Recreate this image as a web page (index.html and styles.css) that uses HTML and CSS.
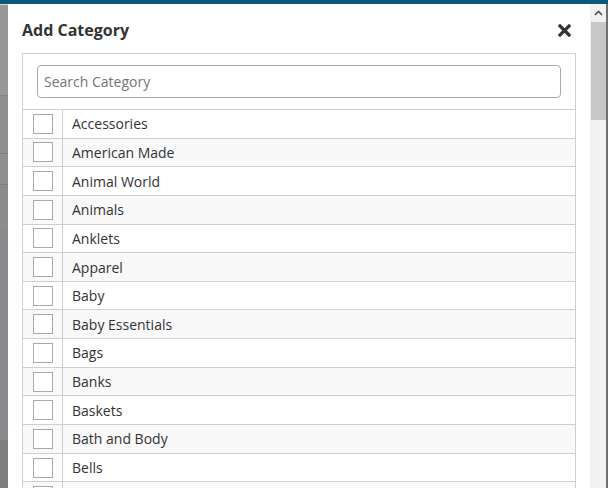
FILE: index.html
```html
<!DOCTYPE html>
<html>
<head>
<meta charset="utf-8">
<link rel="stylesheet" href="styles.css">
</head>
<body>
<div class="topbar"></div>
<div class="backdrop"></div>
<div class="modal">
  <div class="modal-content">
    <div class="modal-header">
      <h2 class="title">Add Category</h2>
      <button class="close" aria-label="Close">
        <svg width="13" height="13" viewBox="0 0 13 13"><path d="M2 2 L11 11 M11 2 L2 11" stroke="#333" stroke-width="3.2" stroke-linecap="square"/></svg>
      </button>
    </div>
    <div class="modal-body">
      <div class="cat-table">
        <div class="search-row">
          <input class="search" type="text" placeholder="Search Category">
        </div>
        <div class="row"><div class="cell-check"><span class="box"></span></div><div class="cell-name">Accessories</div></div>
        <div class="row alt"><div class="cell-check"><span class="box"></span></div><div class="cell-name">American Made</div></div>
        <div class="row"><div class="cell-check"><span class="box"></span></div><div class="cell-name">Animal World</div></div>
        <div class="row alt"><div class="cell-check"><span class="box"></span></div><div class="cell-name">Animals</div></div>
        <div class="row"><div class="cell-check"><span class="box"></span></div><div class="cell-name">Anklets</div></div>
        <div class="row alt"><div class="cell-check"><span class="box"></span></div><div class="cell-name">Apparel</div></div>
        <div class="row"><div class="cell-check"><span class="box"></span></div><div class="cell-name">Baby</div></div>
        <div class="row alt"><div class="cell-check"><span class="box"></span></div><div class="cell-name">Baby Essentials</div></div>
        <div class="row"><div class="cell-check"><span class="box"></span></div><div class="cell-name">Bags</div></div>
        <div class="row alt"><div class="cell-check"><span class="box"></span></div><div class="cell-name">Banks</div></div>
        <div class="row"><div class="cell-check"><span class="box"></span></div><div class="cell-name">Baskets</div></div>
        <div class="row alt"><div class="cell-check"><span class="box"></span></div><div class="cell-name">Bath and Body</div></div>
        <div class="row"><div class="cell-check"><span class="box"></span></div><div class="cell-name">Bells</div></div>
        <div class="row alt"><div class="cell-check"><span class="box"></span></div><div class="cell-name"></div></div>
      </div>
    </div>
  </div>
  <div class="scrollbar">
    <div class="sb-up">
      <svg width="9" height="6" viewBox="0 0 9 6"><path d="M1 5 L4.5 1.5 L8 5" fill="none" stroke="#505050" stroke-width="1.6"/></svg>
    </div>
    <div class="sb-thumb"></div>
  </div>
</div>
</body>
</html>
```

FILE: styles.css
```css
html, body {
  margin: 0;
  padding: 0;
  height: 100%;
  overflow: hidden;
}
body {
  font-family: "Open Sans", "Liberation Sans", sans-serif;
  background: #8e8e8e;
  color: #333;
}
.topbar {
  height: 4px;
  background: #0b5877;
  border-bottom: 1px solid #d8d8d8;
}
.backdrop {
  height: 100%;
  background: linear-gradient(to bottom,
      #979797 0px, #979797 90px, #858585 90px, #858585 91px,
      #8f8f8f 91px, #8f8f8f 148px, #7f7f7f 148px, #7f7f7f 149px,
      #8f8f8f 149px, #8f8f8f 179px, #7f7f7f 179px, #7f7f7f 180px,
      #8c8c8c 180px, #8c8c8c 222px, #888a8d 222px, #888a8d 435px,
      #7d7e80 435px);
}
.modal {
  position: absolute;
  left: 8px;
  top: 4px;
  width: 598px;
  bottom: 0;
  background: #fff;
  border-right: 2px solid #6f6f6f;
  display: flex;
  overflow: hidden;
}
.modal-content {
  flex: 1;
  min-width: 0;
  overflow: hidden;
}
.modal-header {
  display: flex;
  align-items: center;
  justify-content: space-between;
  padding: 15px 19px 12px 14px;
  height: 22px;
}
.title {
  margin: 0;
  font-size: 16px;
  line-height: 22px;
  font-weight: 700;
  color: #333;
}
.close {
  border: 0;
  background: transparent;
  padding: 0;
  margin: 0;
  width: 13px;
  height: 13px;
  display: flex;
}
.modal-body {
  padding: 0 14px 20px 14px;
}
.cat-table {
  border: 1px solid #cfcfcf;
}
.search-row {
  padding: 11px 14px 11px 14px;
  border-bottom: 1px solid #cfcfcf;
}
.search {
  display: block;
  box-sizing: border-box;
  width: 100%;
  height: 33px;
  border: 1px solid #aaa;
  border-radius: 4px;
  padding: 0 6px;
  font-family: "Open Sans", "Liberation Sans", sans-serif;
  font-size: 14px;
  color: #333;
  outline: none;
}
.search::placeholder {
  color: #757575;
}
.row {
  display: flex;
  height: 27.65px;
  border-bottom: 1px solid #cfcfcf;
  background: #fff;
}
.row.alt {
  background: #f9f9f9;
}
.cell-check {
  width: 39px;
  flex: none;
  border-right: 1px solid #cfcfcf;
  display: flex;
  align-items: center;
  justify-content: center;
}
.box {
  box-sizing: border-box;
  width: 20px;
  height: 20px;
  border: 1px solid #a9a9a9;
  background: #fff;
}
.cell-name {
  display: flex;
  align-items: center;
  padding-left: 9px;
  font-size: 14px;
  color: #333;
}
.scrollbar {
  width: 16px;
  flex: none;
  background: #f1f1f1;
  display: flex;
  flex-direction: column;
  align-items: center;
}
.sb-up {
  height: 18px;
  width: 16px;
  display: flex;
  align-items: center;
  justify-content: center;
}
.sb-thumb {
  width: 15px;
  height: 98px;
  background: #c7c7c7;
}
```
